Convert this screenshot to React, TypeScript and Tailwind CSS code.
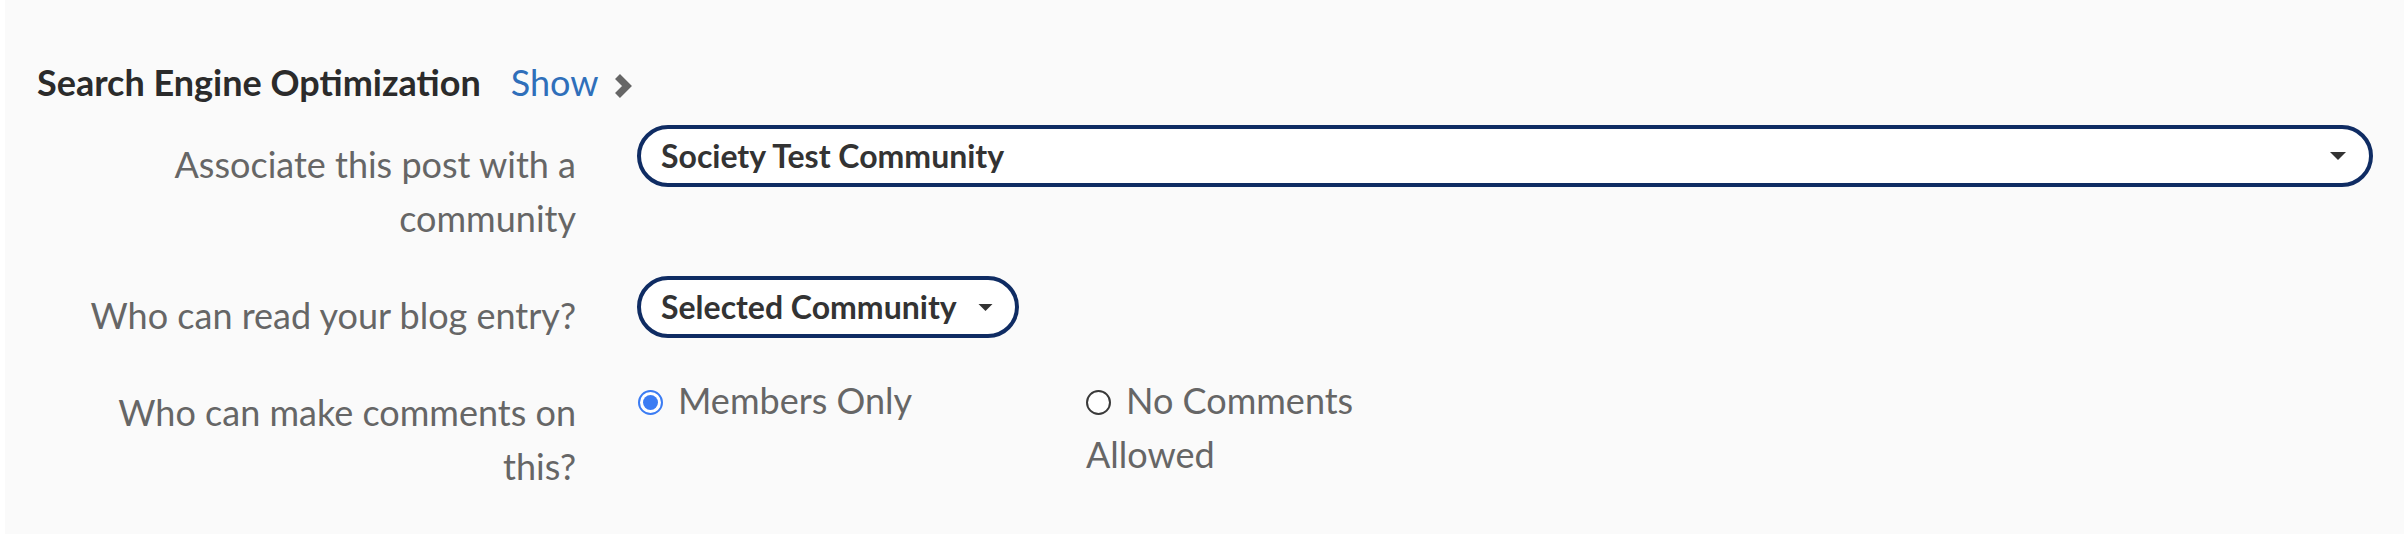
function Caret({ className }: { className?: string }) {
  return (
    <svg viewBox="0 0 16 8" className={className} fill="#333">
      <path d="M0 0h16L8 8z" />
    </svg>
  );
}

function Chevron() {
  return (
    <svg viewBox="0 0 20 26" className="w-[20px] h-[26px]">
      <polyline points="4.5,3.5 14,13 4.5,22.5" fill="none" stroke="#666" strokeWidth="7" strokeLinejoin="miter" />
    </svg>
  );
}

function Radio({ checked }: { checked?: boolean }) {
  if (checked) {
    return (
      <span className="inline-block w-[25px] h-[25px] rounded-full border-[2px] border-[#3b7cf3] bg-white p-[3px] align-[-1px] mr-[15px]">
        <span className="block w-full h-full rounded-full bg-[#3b7cf3]" />
      </span>
    );
  }
  return (
    <span className="inline-block w-[25px] h-[25px] rounded-full border-[2px] border-[#3a3a3a] bg-white align-[-1px] mr-[15px]" />
  );
}

function Label({ children }: { children: React.ReactNode }) {
  return (
    <div className="w-[600px] shrink-0 pl-[34px] pr-[61px] pt-[12px] text-right text-[36px] leading-[54px] text-[#666]">
      {children}
    </div>
  );
}

export default function App() {
  return (
    <div className="min-h-screen bg-white pl-[5px] font-[Lato,sans-serif]">
      <div className="h-[534px] bg-[#fafafa] pl-[32px] pr-[31px] pt-[55px]">
        <div className="flex items-center">
          <h2 className="text-[36px] font-bold leading-[54px] text-[#2b2b2b]">Search Engine Optimization</h2>
          <span className="ml-[30px] text-[36px] leading-[54px] text-[#2f6fba]">Show</span>
          <span className="ml-[15px] mt-[8px] flex">
            <Chevron />
          </span>
        </div>

        <div className="mt-[16px] flex flex-col gap-[31px]">
          <div className="flex">
            <Label>Associate this post with a community</Label>
            <div className="flex-1">
              <div className="h-[62px] rounded-full border-[4px] border-[#0f2c63] bg-white flex items-center justify-between pl-[20px] pr-[23px]">
                <span className="text-[32px] font-bold text-[#333]">Society Test Community</span>
                <Caret className="w-[16px] h-[8px]" />
              </div>
            </div>
          </div>

          <div className="flex">
            <Label>Who can read your blog entry?</Label>
            <div className="flex-1">
              <div className="inline-flex h-[62px] rounded-full border-[4px] border-[#0f2c63] bg-white items-center pl-[20px] pr-[22px]">
                <span className="text-[32px] font-bold text-[#333]">Selected Community</span>
                <Caret className="ml-[21px] w-[15px] h-[7px]" />
              </div>
            </div>
          </div>

          <div className="flex">
            <Label>Who can make comments on this?</Label>
            <div className="flex-1 flex text-[36px] leading-[54px] text-[#666]">
              <label className="block w-[449px] pl-[1px]">
                <Radio checked />
                Members Only
              </label>
              <label className="block w-[300px]">
                <Radio />
                No Comments Allowed
              </label>
            </div>
          </div>
        </div>
      </div>
    </div>
  );
}
